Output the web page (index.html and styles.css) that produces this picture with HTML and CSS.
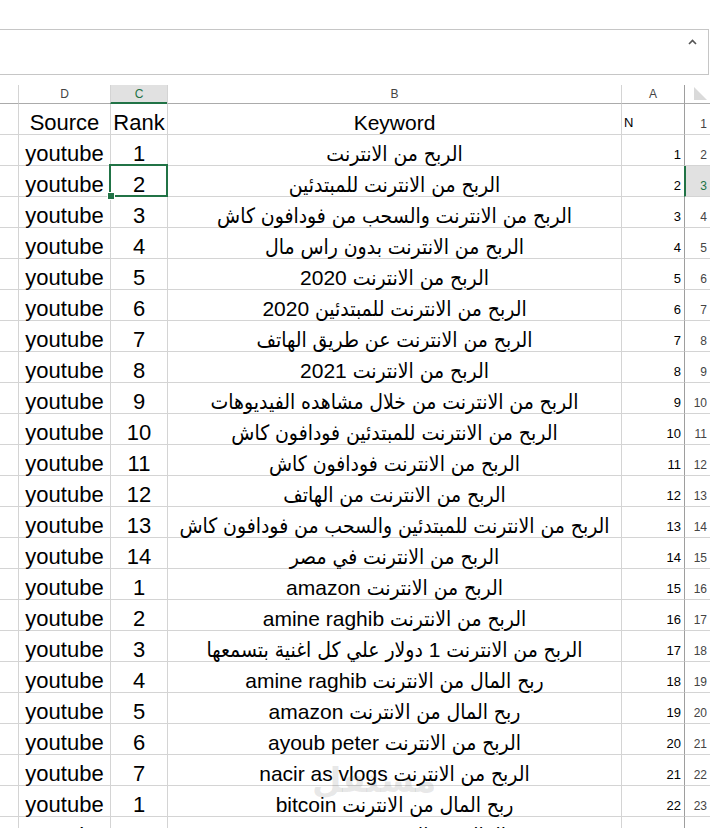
FILE: index.html
```html
<!DOCTYPE html>
<html lang="ar">
<head>
    <meta charset="UTF-8">
    <meta name="viewport" content="width=device-width, initial-scale=1.0">
    <title>Keywords - Excel</title>
    <link rel="stylesheet" href="styles.css">
</head>
<body>
    <div class="formula-bar">
        <svg class="caret" width="9" height="6" viewBox="0 0 9 6"><polyline points="1,5 4.5,1.5 8,5" fill="none" stroke="#555" stroke-width="1.6"/></svg>
    </div>

    <div class="sheet">
        <!-- column headers -->
        <div class="hd rh corner"><svg width="14" height="13" viewBox="0 0 14 13"><polygon points="1,0 1,13 14,13" fill="#dadada"/></svg></div>
        <div class="hd">A</div>
        <div class="hd">B</div>
        <div class="hd sel-col">C</div>
        <div class="hd">D</div>
        <div class="hd e"></div>

        <div class="rh">1</div><div class="a n">N</div><div class="b">Keyword</div><div class="c">Rank</div><div class="d">Source</div><div class="e"></div>
        <div class="rh">2</div><div class="a">1</div><div class="b">الربح من الانترنت</div><div class="c">1</div><div class="d">youtube</div><div class="e"></div>
        <div class="rh sel-row">3</div><div class="a">2</div><div class="b">الربح من الانترنت للمبتدئين</div><div class="c active">2</div><div class="d">youtube</div><div class="e"></div>
        <div class="rh">4</div><div class="a">3</div><div class="b">الربح من الانترنت والسحب من فودافون كاش</div><div class="c">3</div><div class="d">youtube</div><div class="e"></div>
        <div class="rh">5</div><div class="a">4</div><div class="b">الربح من الانترنت بدون راس مال</div><div class="c">4</div><div class="d">youtube</div><div class="e"></div>
        <div class="rh">6</div><div class="a">5</div><div class="b">الربح من الانترنت 2020</div><div class="c">5</div><div class="d">youtube</div><div class="e"></div>
        <div class="rh">7</div><div class="a">6</div><div class="b">الربح من الانترنت للمبتدئين 2020</div><div class="c">6</div><div class="d">youtube</div><div class="e"></div>
        <div class="rh">8</div><div class="a">7</div><div class="b">الربح من الانترنت عن طريق الهاتف</div><div class="c">7</div><div class="d">youtube</div><div class="e"></div>
        <div class="rh">9</div><div class="a">8</div><div class="b">الربح من الانترنت 2021</div><div class="c">8</div><div class="d">youtube</div><div class="e"></div>
        <div class="rh">10</div><div class="a">9</div><div class="b">الربح من الانترنت من خلال مشاهده الفيديوهات</div><div class="c">9</div><div class="d">youtube</div><div class="e"></div>
        <div class="rh">11</div><div class="a">10</div><div class="b">الربح من الانترنت للمبتدئين فودافون كاش</div><div class="c">10</div><div class="d">youtube</div><div class="e"></div>
        <div class="rh">12</div><div class="a">11</div><div class="b">الربح من الانترنت فودافون كاش</div><div class="c">11</div><div class="d">youtube</div><div class="e"></div>
        <div class="rh">13</div><div class="a">12</div><div class="b">الربح من الانترنت من الهاتف</div><div class="c">12</div><div class="d">youtube</div><div class="e"></div>
        <div class="rh">14</div><div class="a">13</div><div class="b">الربح من الانترنت للمبتدئين والسحب من فودافون كاش</div><div class="c">13</div><div class="d">youtube</div><div class="e"></div>
        <div class="rh">15</div><div class="a">14</div><div class="b">الربح من الانترنت في مصر</div><div class="c">14</div><div class="d">youtube</div><div class="e"></div>
        <div class="rh">16</div><div class="a">15</div><div class="b">الربح من الانترنت amazon</div><div class="c">1</div><div class="d">youtube</div><div class="e"></div>
        <div class="rh">17</div><div class="a">16</div><div class="b">الربح من الانترنت amine raghib</div><div class="c">2</div><div class="d">youtube</div><div class="e"></div>
        <div class="rh">18</div><div class="a">17</div><div class="b">الربح من الانترنت 1 دولار علي كل اغنية بتسمعها</div><div class="c">3</div><div class="d">youtube</div><div class="e"></div>
        <div class="rh">19</div><div class="a">18</div><div class="b">ربح المال من الانترنت amine raghib</div><div class="c">4</div><div class="d">youtube</div><div class="e"></div>
        <div class="rh">20</div><div class="a">19</div><div class="b">ربح المال من الانترنت amazon</div><div class="c">5</div><div class="d">youtube</div><div class="e"></div>
        <div class="rh">21</div><div class="a">20</div><div class="b">الربح من الانترنت ayoub peter</div><div class="c">6</div><div class="d">youtube</div><div class="e"></div>
        <div class="rh">22</div><div class="a">21</div><div class="b">الربح من الانترنت nacir as vlogs</div><div class="c">7</div><div class="d">youtube</div><div class="e"></div>
        <div class="rh">23</div><div class="a">22</div><div class="b">ربح المال من الانترنت bitcoin</div><div class="c">1</div><div class="d">youtube</div><div class="e"></div>
        <div class="rh">24</div><div class="a">23</div><div class="b">ربح المال من الانترنت ayoub peter</div><div class="c">2</div><div class="d">youtube</div><div class="e"></div>
    </div>

    <div class="watermark">مستقل</div>
</body>
</html>
```

FILE: styles.css
```css
body {
    margin: 0;
    background: white;
    font-family: 'Liberation Sans', 'DejaVu Sans', sans-serif;
    overflow: hidden;
    height: 828px;
    position: relative;
}
.formula-bar {
    box-sizing: border-box;
    width: 710px;
    height: 46px;
    margin: 29px 0 10px -1px;
    border: 1px solid #c6c6c6;
    position: relative;
}
.caret {
    position: absolute;
    right: 11px;
    top: 9px;
}
.sheet {
    direction: rtl;
    display: grid;
    grid-template-columns: 26px 63px 454px 57px 92px 18px;
    grid-template-rows: 19px;
    grid-auto-rows: 31px;
}
.sheet > div {
    box-sizing: border-box;
    border-left: 1px solid #d4d4d4;
    border-bottom: 1px solid #d4d4d4;
    display: flex;
    align-items: flex-end;
    justify-content: center;
    white-space: nowrap;
    overflow: visible;
    font-size: 22px;
    line-height: 22px;
    padding-bottom: 0;
    color: #000;
}
.sheet > .b {
    font-family: 'Liberation Sans', 'DejaVu Sans Condensed', 'DejaVu Sans', sans-serif;
    font-size: 21px;
    line-height: 22px;
}
.sheet > .hd {
    font-size: 12px;
    line-height: 14px;
    color: #444;
    align-items: center;
    padding: 0;
    border-bottom-color: #ababab;
}
.sheet > .corner {
    align-items: flex-end;
    justify-content: flex-start;
    padding: 0 5px 2px 0;
}
.sheet > .sel-col {
    background: #e1e1e1;
    color: #217346;
    border-bottom: 2px solid #217346;
}
.sheet > .rh {
    font-size: 12px;
    line-height: 14px;
    color: #444;
    border-left-color: #9e9e9e;
    justify-content: flex-start;
    padding: 0 3px 3px 0;
}
.sheet > .sel-row {
    background: #e1e1e1;
    color: #217346;
    border-left: 2px solid #217346;
}
.sheet > .a {
    font-size: 13px;
    line-height: 15px;
    justify-content: flex-start;
    padding: 0 3px 3px 0;
}
.sheet > .n {
    justify-content: flex-end;
    padding: 0 0 4px 2px;
}
.sheet > .e {
    border-left: none;
}
.sheet > .active {
    position: relative;
}
.active::after {
    content: '';
    position: absolute;
    top: -2px;
    right: -1px;
    bottom: -1px;
    left: -2px;
    border: 2px solid #217346;
}
.active::before {
    content: '';
    position: absolute;
    left: -4px;
    bottom: -4px;
    width: 6px;
    height: 6px;
    background: #217346;
    border: 1px solid white;
    z-index: 2;
}
.watermark {
    position: absolute;
    left: 312px;
    top: 760px;
    font-family: 'DejaVu Sans', sans-serif;
    font-weight: bold;
    font-size: 34px;
    color: rgba(110, 110, 110, 0.16);
    direction: rtl;
}
```
